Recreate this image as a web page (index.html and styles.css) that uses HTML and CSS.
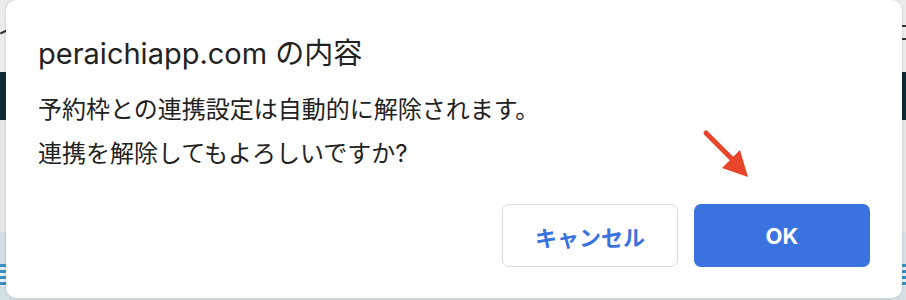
FILE: index.html
```html
<!DOCTYPE html>
<html lang="ja">
<head>
    <meta charset="UTF-8">
    <meta name="viewport" content="width=device-width, initial-scale=1.0">
    <title>peraichiapp.com の内容</title>
    <link rel="stylesheet" href="styles.css">
</head>
<body>
    <div class="page">
        <div class="page-header">
            <div class="header-mark"></div>
            <div class="header-rules"></div>
        </div>
        <div class="page-nav"></div>
        <div class="page-content"></div>
        <div class="page-section">
            <div class="section-icon left"></div>
            <div class="section-icon right"></div>
        </div>
    </div>

    <div class="alert-dialog" role="alertdialog">
        <h2 class="alert-title">peraichiapp.com の内容</h2>
        <p class="alert-message">予約枠との連携設定は自動的に解除されます。<br>連携を解除してもよろしいですか?</p>
        <div class="alert-actions">
            <button class="alert-btn cancel">キャンセル</button>
            <button class="alert-btn ok">OK</button>
        </div>
    </div>

    <svg class="pointer-arrow" width="60" height="60" viewBox="0 0 60 60">
        <line x1="6" y1="5" x2="34" y2="33" stroke="#e9452a" stroke-width="5" stroke-linecap="round"/>
        <polygon points="48,49 22,40 40,22" fill="#e9452a"/>
    </svg>
</body>
</html>
```

FILE: styles.css
```css
* {
    box-sizing: border-box;
}
body {
    margin: 0;
    width: 906px;
    height: 300px;
    overflow: hidden;
    font-family: Inter, "Noto Sans CJK JP", sans-serif;
    position: relative;
}
.page {
    display: flex;
    flex-direction: column;
    height: 300px;
}
.page-header {
    height: 72px;
    background: #ececec;
    position: relative;
}
.header-mark {
    position: absolute;
    left: 0;
    top: 31px;
    width: 7px;
    height: 2px;
    background: #333;
    transform: rotate(-25deg);
}
.header-rules {
    position: absolute;
    right: 0;
    top: 25px;
    width: 10px;
    height: 15px;
    border-top: 2px solid #333;
    border-bottom: 2px solid #333;
}
.page-nav {
    height: 48px;
    background: #0f2a32;
}
.page-content {
    height: 112px;
    background: #e6e6e6;
}
.page-section {
    flex: 1;
    background: #d3e1e7;
    position: relative;
}
.section-icon {
    position: absolute;
    top: 32px;
    width: 8px;
    height: 22px;
    background: repeating-linear-gradient(#3a8fbf 0 3px, #e4eef2 3px 6px);
}
.section-icon.left {
    left: -2px;
}
.section-icon.right {
    right: 0;
}

.alert-dialog {
    position: absolute;
    left: 6px;
    top: 0;
    width: 896px;
    background: #fff;
    border-radius: 10px;
    padding: 38px 32px 31px;
    box-shadow: 0 0 3px rgba(0, 0, 0, 0.18);
}
.alert-title {
    margin: 0 0 18px;
    font-size: 29px;
    line-height: 32px;
    font-weight: 400;
    color: #222;
}
.alert-message {
    margin: 0 0 28px;
    font-size: 24px;
    line-height: 44px;
    color: #222;
}
.alert-actions {
    display: flex;
    justify-content: flex-end;
    gap: 16px;
}
.alert-btn {
    width: 176px;
    height: 63px;
    border-radius: 7px;
    font-family: Inter, "Noto Sans CJK JP", sans-serif;
    font-size: 22px;
    font-weight: 700;
    cursor: pointer;
}
.alert-btn.cancel {
    background: #fff;
    border: 1px solid #dadada;
    color: #3a73de;
}
.alert-btn.ok {
    background: #3a73df;
    border: none;
    color: #fff;
}
.pointer-arrow {
    position: absolute;
    left: 700px;
    top: 128px;
}
```
